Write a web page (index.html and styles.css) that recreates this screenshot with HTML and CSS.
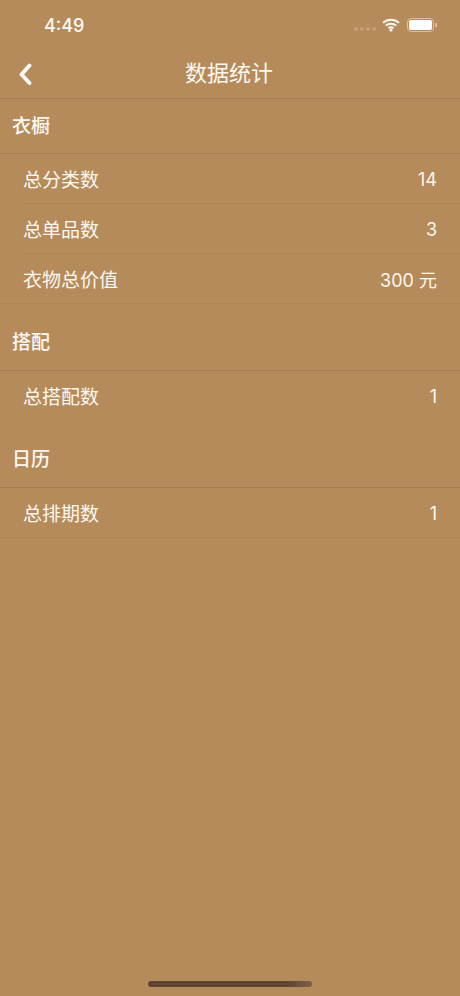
FILE: index.html
```html
<!DOCTYPE html>
<html lang="zh">
<head>
<meta charset="utf-8">
<title>数据统计</title>
<link rel="stylesheet" href="styles.css">
</head>
<body>
<div class="screen">
  <div class="status">
    <span class="time">4:49</span>
    <div class="status-icons">
      <div class="signal"><i></i><i></i><i></i><i></i></div>
      <svg class="wifi" width="18" height="14" viewBox="0 0 18 14"><path d="M1 4.8C5.6 .6 12.4 .6 17 4.8" class="arc"/><path d="M3.8 7.6C6.8 5 11.2 5 14.2 7.6" class="arc"/><path d="M6.5 10.2C8 9 10 9 11.5 10.2" class="arc"/><circle cx="9" cy="12" r="1.6" class="dot"/></svg>
      <div class="battery"><div class="battery-fill"></div></div>
      <div class="battery-cap"></div>
    </div>
  </div>
  <header class="nav">
    <svg class="back" width="16" height="24" viewBox="0 0 16 24"><path d="M12.5 3.5L4.5 12.5L12.5 21"/></svg>
    <h1 class="title">数据统计</h1>
  </header>
  <section class="group first">
    <h2 class="group-title">衣橱</h2>
    <div class="row"><span>总分类数</span><span class="value">14</span></div>
    <div class="row inset"><span>总单品数</span><span class="value">3</span></div>
    <div class="row inset"><span>衣物总价值</span><span class="value">300 元</span></div>
    <div class="rule"></div>
  </section>
  <section class="group">
    <h2 class="group-title">搭配</h2>
    <div class="row"><span>总搭配数</span><span class="value">1</span></div>
  </section>
  <section class="group">
    <h2 class="group-title">日历</h2>
    <div class="row"><span>总排期数</span><span class="value">1</span></div>
    <div class="rule"></div>
  </section>
  <div class="home"></div>
</div>
</body>
</html>
```
FILE: styles.css
```css
* { box-sizing: border-box; }
html, body { margin: 0; padding: 0; }
body { font-family: "Inter", "Noto Sans CJK SC", sans-serif; color: #fdf8f1; background: #b68b5b; }
.screen { position: relative; width: 460px; height: 996px; overflow: hidden; background: #b68b5b; }
.status { height: 50px; position: relative; }
.time { position: absolute; left: 44px; top: 14px; font-size: 18px; line-height: 24px; font-weight: 500; font-family: "Inter", sans-serif; }
.status-icons { position: absolute; left: 354px; top: 18px; display: flex; align-items: center; }
.signal { display: flex; gap: 2px; margin-top: 8px; width: 27px; }
.signal i { display: block; width: 4px; height: 4px; border-radius: 50%; background: #c5a177; }
.wifi { margin-left: 0.5px; }
.wifi .arc { fill: none; stroke: #fdf8f1; stroke-width: 2; }
.wifi .dot { fill: #fdf8f1; }
.battery { margin-left: 7.5px; width: 27px; height: 14px; border: 1px solid #d9bf9f; border-radius: 4px; padding: 1px; }
.battery-fill { width: 100%; height: 100%; border-radius: 2px; background: #fff; }
.battery-cap { width: 1.5px; height: 4px; margin-left: 1px; background: #d9bf9f; }
.nav { height: 49px; border-bottom: 1px solid #a87e50; display: flex; align-items: flex-start; justify-content: center; position: relative; }
.back { position: absolute; left: 17px; top: 12px; }
.back path { fill: none; stroke: #fdf8f1; stroke-width: 4; stroke-linecap: round; stroke-linejoin: round; }
.title { margin: 0 2px 0 0; font-size: 22px; font-weight: 400; line-height: 46px; height: 46px; }
.group-title { margin: 0; height: 67px; padding: 26px 0 0 12px; font-size: 19px; line-height: 25px; font-weight: 500; border-bottom: 1px solid #a87e50; }
.first .group-title { height: 55px; padding-top: 15px; }
.row { height: 50px; padding: 0 23px 2px 23px; display: flex; align-items: center; justify-content: space-between; font-size: 19px; font-weight: 400; position: relative; }
.value { font-size: 18px; padding-top: 2px; }
.row.inset::before { content: ""; position: absolute; left: 24px; right: 0; top: -1px; height: 1px; background: #ae8455; }
.rule { height: 1px; margin-top: -1px; background: #ae8455; position: relative; }
.home { position: absolute; left: 148px; top: 981px; width: 164px; height: 6px; border-radius: 3px; background: linear-gradient(90deg, #5e4433, #5e4433 85%, #7d6248); }
```
